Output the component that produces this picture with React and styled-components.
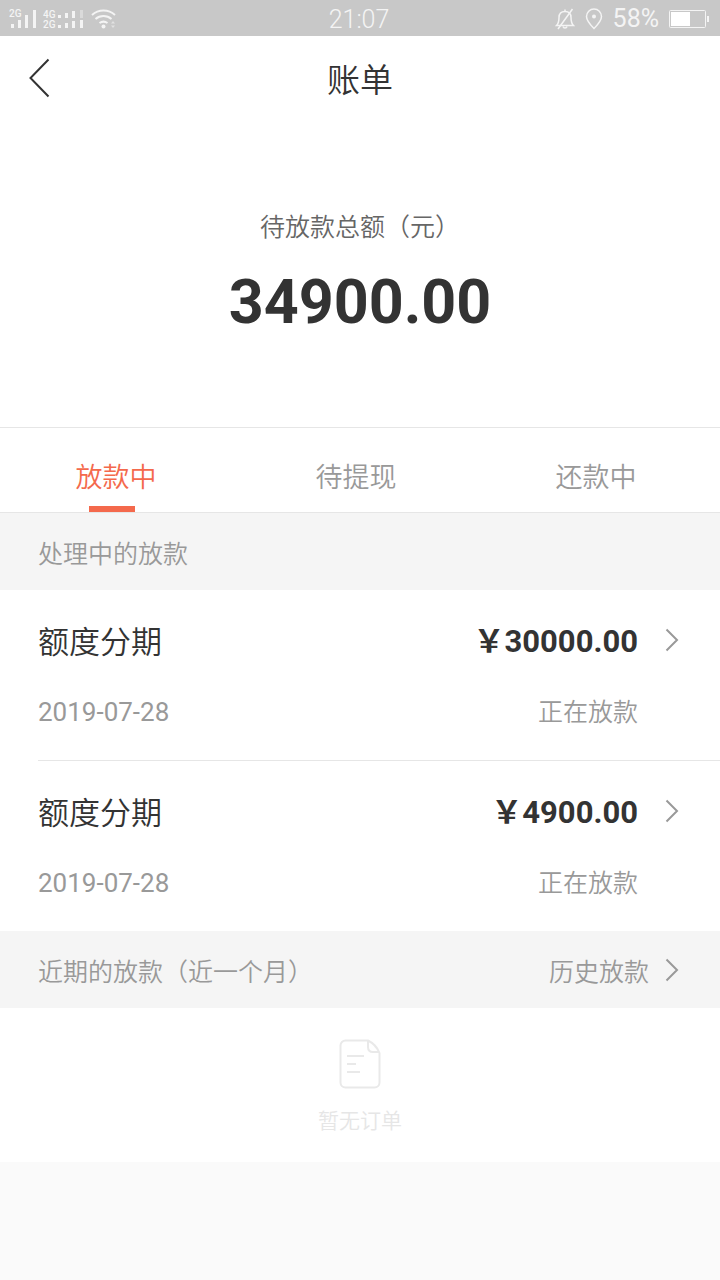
import React from 'react';
import styled, { createGlobalStyle } from 'styled-components';

const loans = [
  { id: 1, title: '额度分期', amount: '30000.00', date: '2019-07-28', status: '正在放款' },
  { id: 2, title: '额度分期', amount: '4900.00', date: '2019-07-28', status: '正在放款' },
];

const tabs = ['放款中', '待提现', '还款中'];

const App = () => {
  const [active, setActive] = React.useState(0);

  return (
    <>
      <GlobalStyle />
      <StatusBar>
        <StatusGroup>
          <SignalIcon />
          <DualSignalIcon />
          <WifiIcon />
        </StatusGroup>
        <Clock>21:07</Clock>
        <StatusGroup $end>
          <BellOffIcon />
          <PinIcon />
          <Battery>58%</Battery>
          <BatteryIcon />
        </StatusGroup>
      </StatusBar>

      <Header>
        <BackButton type="button" aria-label="返回">
          <svg width="22" height="40" viewBox="0 0 22 40" fill="none" stroke="#333" strokeWidth="2">
            <path d="M20.5 1.5L2.5 20l18 18.5" />
          </svg>
        </BackButton>
        <Title>账单</Title>
      </Header>

      <Summary>
        <SummaryLabel>待放款总额（元）</SummaryLabel>
        <Total>34900.00</Total>
      </Summary>

      <Tabs>
        {tabs.map((tab, i) => (
          <Tab key={tab} type="button" $active={i === active} onClick={() => setActive(i)}>
            <TabLabel>{tab}</TabLabel>
          </Tab>
        ))}
      </Tabs>

      <SectionBar>
        <SectionTitle>处理中的放款</SectionTitle>
      </SectionBar>
      <LoanList>
        {loans.map((loan) => (
          <Loan key={loan.id}>
            <LoanLine>
              <LoanTitle>{loan.title}</LoanTitle>
              <Amount>￥{loan.amount}</Amount>
              <Chevron />
            </LoanLine>
            <LoanLine>
              <LoanDate>{loan.date}</LoanDate>
              <LoanStatus>{loan.status}</LoanStatus>
            </LoanLine>
          </Loan>
        ))}
      </LoanList>

      <SectionBar>
        <SectionTitle>近期的放款（近一个月）</SectionTitle>
        <HistoryLink href="#history">
          历史放款
          <Chevron />
        </HistoryLink>
      </SectionBar>
      <Empty>
        <OrderIcon />
        <EmptyText>暂无订单</EmptyText>
      </Empty>
    </>
  );
};

export default App;

// Iconos
const Chevron = () => (
  <svg width="14" height="24" viewBox="0 0 14 24" fill="none" stroke="#999" strokeWidth="2">
    <path d="M1.5 1.5L12 12 1.5 22.5" />
  </svg>
);

const SignalIcon = () => (
  <svg width="28" height="20" viewBox="0 0 28 20" fill="#f4f4f4">
    <text x="0" y="8" fontSize="10" fontWeight="500" fontFamily="Roboto, sans-serif">2G</text>
    <rect x="2" y="15" width="3" height="4" />
    <rect x="9" y="11" width="3" height="8" />
    <rect x="16" y="6" width="3" height="13" />
    <rect x="24" y="1" width="3" height="18" />
  </svg>
);

const DualSignalIcon = () => (
  <svg width="42" height="20" viewBox="0 0 42 20" fill="#f4f4f4">
    <text x="0" y="9" fontSize="10" fontWeight="500" fontFamily="Roboto, sans-serif">4G</text>
    <text x="0" y="19" fontSize="10" fontWeight="500" fontFamily="Roboto, sans-serif">2G</text>
    <rect x="15" y="6" width="3" height="3" />
    <rect x="22" y="4" width="3" height="5" />
    <rect x="29" y="2" width="3" height="7" />
    <rect x="37" y="1" width="3" height="8" opacity="0.4" />
    <rect x="15" y="16" width="3" height="3" />
    <rect x="22" y="14" width="3" height="5" />
    <rect x="29" y="12" width="3" height="7" />
    <rect x="37" y="11" width="3" height="8" />
  </svg>
);

const WifiIcon = () => (
  <svg width="26" height="20" viewBox="0 0 26 20" fill="none" stroke="#f4f4f4" strokeWidth="2">
    <path d="M1 6a17 17 0 0 1 23 0" />
    <path d="M4.5 10a12 12 0 0 1 16 0" />
    <path d="M8.5 14a7 7 0 0 1 8 0" />
    <circle cx="12.5" cy="17.5" r="2" fill="#f4f4f4" stroke="none" />
    <path d="M20 14.5l2-2.5 2 2.5zM20 16.5l2 2.5 2-2.5z" fill="#e2e2e2" stroke="none" />
  </svg>
);

const BellOffIcon = () => (
  <svg width="20" height="22" viewBox="0 0 20 22" fill="none" stroke="#f4f4f4" strokeWidth="1.5">
    <path d="M1.5 17.5c2-2 2.5-4 2.5-8 0-4 2.5-6 6-6s6 2 6 6c0 4 .5 6 2.5 8z" />
    <path d="M10 3.5v-2M8 18.5c.5 2 3.5 2 4 0M17.5 1L3 21" />
  </svg>
);

const PinIcon = () => (
  <svg width="18" height="22" viewBox="0 0 18 22" fill="none" stroke="#f4f4f4" strokeWidth="1.5">
    <path d="M9 20.5c-4-4-7.5-8-7.5-12a7.5 7.5 0 0 1 15 0c0 4-3.5 8-7.5 12z" />
    <circle cx="9" cy="8.5" r="2" fill="#f4f4f4" stroke="none" />
  </svg>
);

const BatteryIcon = () => (
  <svg width="40" height="20" viewBox="0 0 40 20" fill="none">
    <rect x="0.5" y="1.5" width="36" height="17" rx="1" stroke="#f4f4f4" />
    <rect x="2" y="3" width="19" height="14" fill="#fff" />
    <rect x="38" y="7" width="2" height="6" fill="#f4f4f4" />
  </svg>
);

const OrderIcon = () => (
  <svg width="42" height="50" viewBox="0 0 42 50" fill="none" stroke="#e9e9e9" strokeWidth="2">
    <path d="M29 1.5H6.5a5 5 0 0 0-5 5v37a5 5 0 0 0 5 5h29a5 5 0 0 0 5-5V14C38.5 9 34 4 29 1.5z" />
    <path d="M29 1.5V8c0 3 2 5 5 5h6" />
    <path d="M8 17h17M8 25h9M8 33h13" />
  </svg>
);

// Estilos
const GlobalStyle = createGlobalStyle`
  * {
    box-sizing: border-box;
  }

  body {
    margin: 0;
    background: #fafafa;
    color: #333;
    font-family: 'Noto Sans CJK SC', sans-serif;
    font-weight: 350;
  }

  svg {
    display: block;
    flex-shrink: 0;
  }
`;

const StatusBar = styled.div`
  display: grid;
  grid-template-columns: 1fr auto 1fr;
  align-items: center;
  height: 36px;
  padding: 0 11px 0 9px;
  background: #c8c8c8;
  color: #f4f4f4;
  font-family: Roboto, sans-serif;
  font-size: 25px;
  line-height: 36px;
`;

const StatusGroup = styled.div`
  display: flex;
  align-items: center;
  gap: ${(props) => (props.$end ? '10px' : '6px')};
  justify-content: ${(props) => (props.$end ? 'flex-end' : 'flex-start')};
`;

const Clock = styled.span`
  padding-top: 2px;
`;

const Battery = styled.span`
  font-weight: 400;
`;

const Header = styled.header`
  display: grid;
  grid-template-columns: 1fr auto 1fr;
  align-items: center;
  height: 84px;
  padding: 0 28px;
  background: #fff;
`;

const BackButton = styled.button`
  width: 22px;
  padding: 0;
  border: 0;
  background: none;
  cursor: pointer;
`;

const Title = styled.h1`
  margin: 0;
  font-size: 33px;
  font-weight: inherit;
  line-height: 48px;
`;

const Summary = styled.section`
  padding: 87px 20px 89px;
  background: #fff;
  text-align: center;
`;

const SummaryLabel = styled.div`
  color: #666;
  font-size: 25px;
  line-height: 36px;
`;

const Total = styled.div`
  margin-top: 23px;
  font-family: Roboto, sans-serif;
  font-size: 61px;
  font-weight: 700;
  line-height: 72px;
`;

const Tabs = styled.nav`
  display: grid;
  grid-template-columns: repeat(3, 1fr);
  height: 86px;
  border-top: 1px solid #e6e6e6;
  border-bottom: 1px solid #e6e6e6;
  background: #fff;
`;

const Tab = styled.button`
  display: flex;
  flex-direction: column;
  align-items: center;
  justify-content: space-between;
  padding: 30px 16px 0 0;
  border: 0;
  background: none;
  color: ${(props) => (props.$active ? '#f4694c' : '#999')};
  font-family: inherit;
  font-size: 27px;
  font-weight: inherit;
  line-height: 36px;
  cursor: pointer;

  &::after {
    content: '';
    width: 46px;
    height: 6px;
    background: ${(props) => (props.$active ? '#f4694c' : 'transparent')};
  }
`;

const TabLabel = styled.span`
  padding-left: 8px;
`;

const SectionBar = styled.div`
  display: flex;
  align-items: center;
  justify-content: space-between;
  height: 77px;
  padding: 0 41px 0 38px;
  background: #f5f5f5;
  color: #999;
  font-size: 25px;
  line-height: 36px;
`;

const SectionTitle = styled.h2`
  margin: 0;
  font-size: 25px;
  font-weight: inherit;
`;

const HistoryLink = styled.a`
  display: flex;
  align-items: center;
  gap: 16px;
  color: inherit;
  text-decoration: none;
`;

const LoanList = styled.ul`
  margin: 0;
  padding: 0 0 0 38px;
  background: #fff;
  list-style: none;
`;

const Loan = styled.li`
  display: grid;
  gap: 28px;
  padding: 29px 41px 29px 0;

  & + & {
    border-top: 1px solid #e6e6e6;
  }
`;

const LoanLine = styled.div`
  display: flex;
  align-items: center;
  height: 42px;
  line-height: 42px;
`;

const LoanTitle = styled.span`
  flex: 1;
  font-size: 31px;
`;

const Amount = styled.span`
  padding-top: 4px;
  margin-right: 27px;
  font-family: Roboto, 'Noto Sans CJK SC', sans-serif;
  font-size: 31px;
  font-weight: 700;
`;

const LoanDate = styled.span`
  flex: 1;
  padding-top: 4px;
  color: #999;
  font-family: Roboto, sans-serif;
  font-size: 26px;
  font-weight: 400;
`;

const LoanStatus = styled.span`
  margin-right: 41px;
  color: #999;
  font-size: 25px;
`;

const Empty = styled.div`
  display: flex;
  flex-direction: column;
  align-items: center;
  gap: 15px;
  padding: 31px 0 28px;
  background: #fff;
`;

const EmptyText = styled.div`
  color: #e6e6e6;
  font-size: 21px;
  line-height: 30px;
`;
